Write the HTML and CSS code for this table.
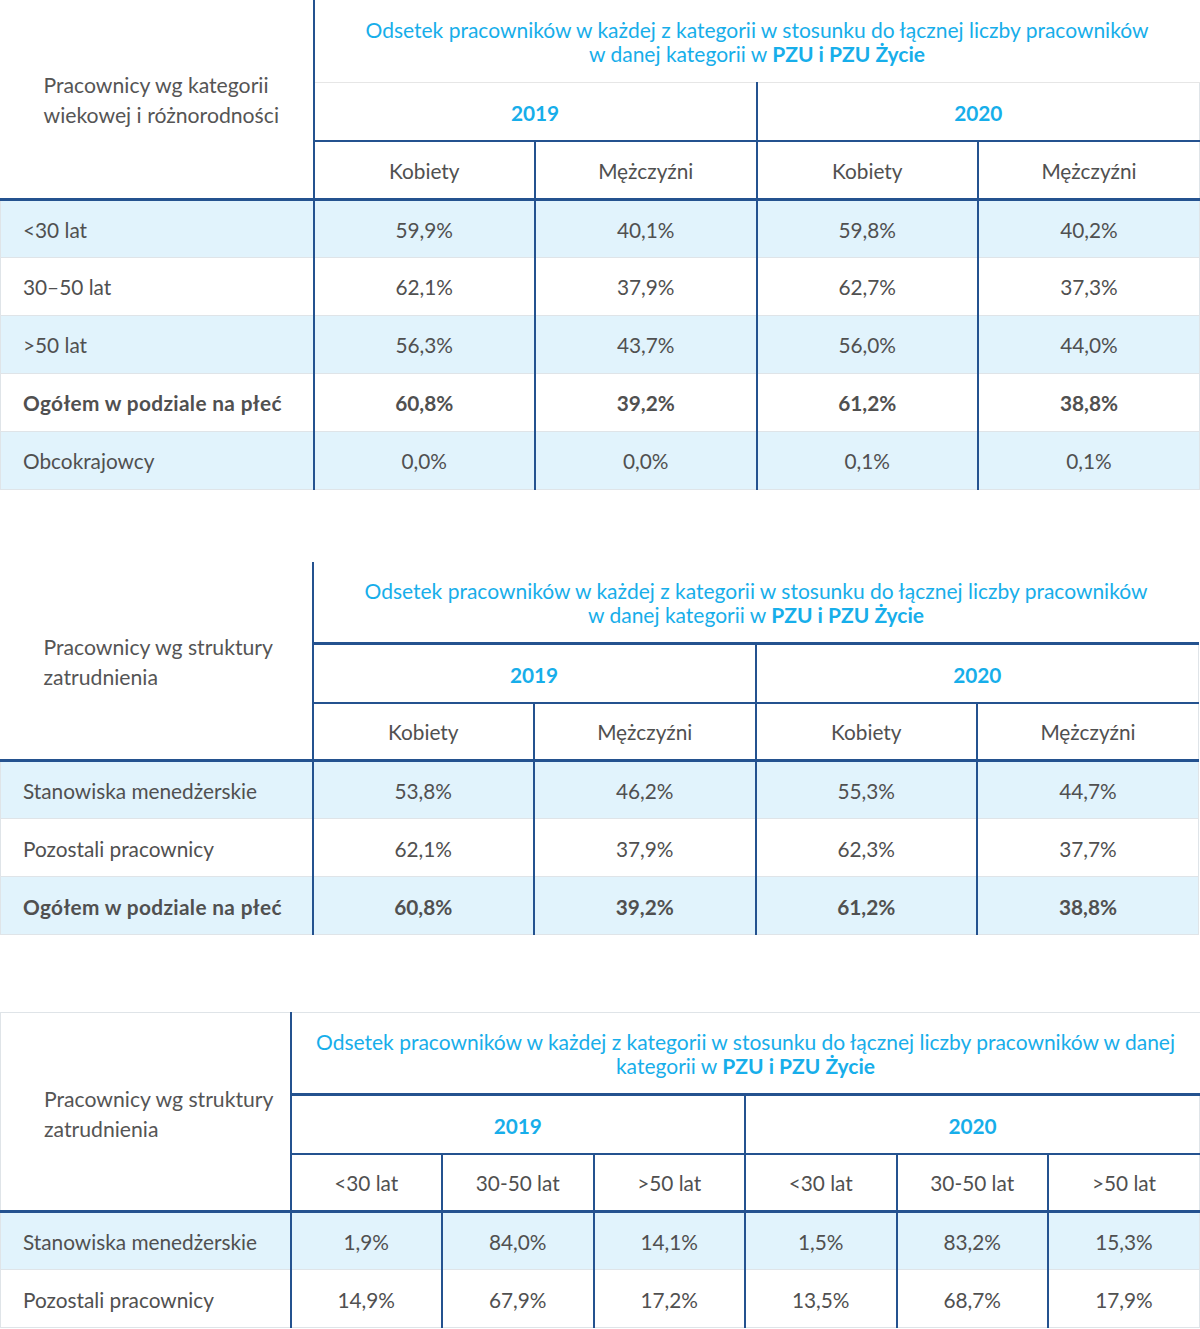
FILE: index.html
```html
<!DOCTYPE html>
<html lang="pl">
<head>
<meta charset="utf-8">
<title>Pracownicy</title>
<link rel="stylesheet" href="styles.css">
</head>
<body>
<div class="page">

<table class="tbl tbl-a">
  <colgroup><col class="c-label1"><col><col><col><col></colgroup>
  <thead>
    <tr class="r-title">
      <th class="corner" rowspan="3">Pracownicy wg kategorii<br>wiekowej i różnorodności</th>
      <th class="title title-light" colspan="4">Odsetek pracowników w każdej z kategorii w stosunku do łącznej liczby pracowników<br>w danej kategorii w <b>PZU i PZU Życie</b></th>
    </tr>
    <tr class="r-year">
      <th class="year" colspan="2">2019</th>
      <th class="year" colspan="2">2020</th>
    </tr>
    <tr class="r-sub">
      <th class="sub">Kobiety</th><th class="sub">Mężczyźni</th><th class="sub">Kobiety</th><th class="sub">Mężczyźni</th>
    </tr>
  </thead>
  <tbody>
    <tr class="alt"><td class="lbl">&lt;30 lat</td><td>59,9%</td><td>40,1%</td><td>59,8%</td><td>40,2%</td></tr>
    <tr><td class="lbl">30–50 lat</td><td>62,1%</td><td>37,9%</td><td>62,7%</td><td>37,3%</td></tr>
    <tr class="alt"><td class="lbl">&gt;50 lat</td><td>56,3%</td><td>43,7%</td><td>56,0%</td><td>44,0%</td></tr>
    <tr class="total"><td class="lbl">Ogółem w podziale na płeć</td><td>60,8%</td><td>39,2%</td><td>61,2%</td><td>38,8%</td></tr>
    <tr class="alt"><td class="lbl">Obcokrajowcy</td><td>0,0%</td><td>0,0%</td><td>0,1%</td><td>0,1%</td></tr>
  </tbody>
</table>

<table class="tbl tbl-b">
  <colgroup><col class="c-label2"><col><col><col><col></colgroup>
  <thead>
    <tr class="r-title">
      <th class="corner" rowspan="3">Pracownicy wg struktury<br>zatrudnienia</th>
      <th class="title" colspan="4">Odsetek pracowników w każdej z kategorii w stosunku do łącznej liczby pracowników<br>w danej kategorii w <b>PZU i PZU Życie</b></th>
    </tr>
    <tr class="r-year">
      <th class="year" colspan="2">2019</th>
      <th class="year" colspan="2">2020</th>
    </tr>
    <tr class="r-sub">
      <th class="sub">Kobiety</th><th class="sub">Mężczyźni</th><th class="sub">Kobiety</th><th class="sub">Mężczyźni</th>
    </tr>
  </thead>
  <tbody>
    <tr class="alt"><td class="lbl">Stanowiska menedżerskie</td><td>53,8%</td><td>46,2%</td><td>55,3%</td><td>44,7%</td></tr>
    <tr><td class="lbl">Pozostali pracownicy</td><td>62,1%</td><td>37,9%</td><td>62,3%</td><td>37,7%</td></tr>
    <tr class="alt total"><td class="lbl">Ogółem w podziale na płeć</td><td>60,8%</td><td>39,2%</td><td>61,2%</td><td>38,8%</td></tr>
  </tbody>
</table>

<table class="tbl tbl-c">
  <colgroup><col class="c-label3"><col><col><col><col><col><col></colgroup>
  <thead>
    <tr class="r-title">
      <th class="corner" rowspan="3">Pracownicy wg struktury<br>zatrudnienia</th>
      <th class="title" colspan="6">Odsetek pracowników w każdej z kategorii w stosunku do łącznej liczby pracowników w danej<br>kategorii w <b>PZU i PZU Życie</b></th>
    </tr>
    <tr class="r-year">
      <th class="year" colspan="3">2019</th>
      <th class="year" colspan="3">2020</th>
    </tr>
    <tr class="r-sub">
      <th class="sub">&lt;30 lat</th><th class="sub">30-50 lat</th><th class="sub">&gt;50 lat</th>
      <th class="sub">&lt;30 lat</th><th class="sub">30-50 lat</th><th class="sub">&gt;50 lat</th>
    </tr>
  </thead>
  <tbody>
    <tr class="alt"><td class="lbl">Stanowiska menedżerskie</td><td>1,9%</td><td>84,0%</td><td>14,1%</td><td>1,5%</td><td>83,2%</td><td>15,3%</td></tr>
    <tr><td class="lbl">Pozostali pracownicy</td><td>14,9%</td><td>67,9%</td><td>17,2%</td><td>13,5%</td><td>68,7%</td><td>17,9%</td></tr>
  </tbody>
</table>

</div>
</body>
</html>
```

FILE: styles.css
```css
html, body {
  margin: 0;
  padding: 0;
  background: #ffffff;
}

body {
  font-family: Lato, "Open Sans", "Liberation Sans", sans-serif;
  color: #505050;
}

.page {
  width: 1200px;
}

.tbl {
  width: 1200px;
  border-collapse: collapse;
  table-layout: fixed;
  font-size: 20.8px;
}

.tbl-b {
  margin-top: 72px;
  width: 1199px;
}

.tbl-c {
  margin-top: 77px;
}

.c-label1 { width: 313px; }
.c-label2 { width: 312px; }
.c-label3 { width: 290px; }

.tbl th,
.tbl td {
  padding: 0;
  font-weight: normal;
  text-align: center;
  vertical-align: middle;
  border: 1px solid #dfe4e8;
}

.r-title { height: 82px; }
.r-year { height: 59px; }
.r-sub { height: 58px; }
.tbl tbody tr { height: 58px; }

.tbl tbody td {
  padding-top: 1px;
}

.corner {
  text-align: left !important;
  padding-left: 43px !important;
  padding-top: 3px !important;
  line-height: 30px;
  font-size: 21.2px;
  border-top: none !important;
  border-left: none !important;
  border-right: 2px solid #24528f !important;
  border-bottom: 3px solid #24528f !important;
  color: #555555;
}

.tbl-c .corner {
  padding-top: 5px !important;
  border-top: 1px solid #dfe4e8 !important;
  border-left: 1px solid #dfe4e8 !important;
}

.title {
  color: #17aeea;
  font-size: 21px;
  line-height: 24px;
  padding-top: 2px !important;
  border-top: none !important;
  border-right: none !important;
  border-bottom: 3px solid #24528f !important;
  white-space: nowrap;
}

.tbl-c .title {
  border-top: 1px solid #dfe4e8 !important;
}

.title-light {
  border-bottom: 1px solid #e6e6e6 !important;
}

.title b {
  font-weight: bold;
}

.year {
  color: #17aeea;
  font-weight: bold !important;
  padding-top: 2px !important;
  border-left: 2px solid #24528f !important;
  border-bottom: 2px solid #24528f !important;
}

.sub {
  padding-top: 1px !important;
  border-left: 2px solid #24528f !important;
  border-bottom: 3px solid #24528f !important;
}

.tbl td {
  border-left: 2px solid #24528f;
}

.tbl td.lbl {
  text-align: left;
  padding-left: 22px;
  border-left: 1px solid #dfe4e8;
  border-right: 2px solid #24528f;
}

.tbl tr.alt td {
  background: #e1f3fc;
}

.tbl tr.total td {
  font-weight: bold;
}

.tbl tr.total td.lbl {
  letter-spacing: 0.35px;
}
```
